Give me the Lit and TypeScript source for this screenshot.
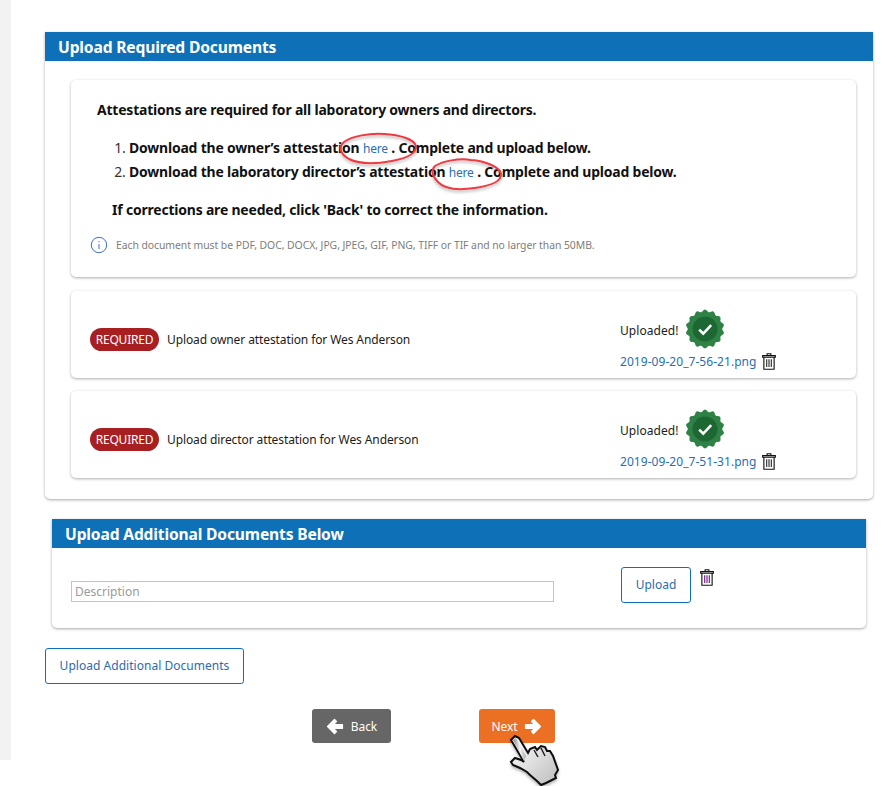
import { LitElement, html, css, svg } from "lit";
import { customElement } from "lit/decorators.js";

function scallop(cx: number, cy: number, r: number, amp: number, n: number) {
  let d = "";
  const steps = n * 8;
  for (let i = 0; i <= steps; i++) {
    const a = (i / steps) * Math.PI * 2;
    const rr = r + amp * Math.cos(a * n);
    d += (i ? "L" : "M") + (cx + rr * Math.sin(a)).toFixed(2) + " " + (cy - rr * Math.cos(a)).toFixed(2);
  }
  return d + "Z";
}

const badge = html`<svg class="badge" width="40" height="40" viewBox="0 0 40 40">
  <path d=${scallop(20, 20, 18.3, 1.1, 14)} fill="#2f8245"></path>
  <circle cx="20" cy="20" r="12.5" fill="#1d6733"></circle>
  <path d="M14.2 20.6l4 4 8-8.4" fill="none" stroke="#fff" stroke-width="2.6"></path>
</svg>`;

const trash = (bar: string) => html`<svg class="trash" width="14" height="17" viewBox="0 0 15 18">
  <path d="M5.5 2.5V.7h4v1.8M.7 2.7h13.6v1.8H.7zM2 4.5v12.8h11V4.5z" fill="none" stroke="#111" stroke-width="1.2"></path>
  <path d="M5 6.5v8.5M7.5 6.5v8.5M10 6.5v8.5" stroke=${bar} stroke-width="1.3"></path>
</svg>`;

const arrow = (flip: boolean) => html`<svg class="arrow ${flip ? "flip" : ""}" width="18" height="17" viewBox="0 0 18 17">
  <path d="M9.5 1.6l6.9 6.9-6.9 6.9-1.9-1.9 3.3-3.3H1.6V6.8h9.3L7.6 3.5z" fill="#fff" stroke="#fff" stroke-width="1.4" stroke-linejoin="round"></path>
</svg>`;

@customElement("app-root")
export class AppRoot extends LitElement {
  static styles = css`
    :host { display: block; height: 786px; position: relative; overflow: hidden; background: #fff;
      font-family: "Noto Sans", sans-serif; color: #1b1b1b; }
    .page { display: flex; align-items: flex-start; }
    .strip { width: 11px; height: 760px; background: #f2f2f2; flex: none; }
    .main { width: 828px; margin-left: 34px; padding-top: 32px; display: flex; flex-direction: column; }
    .panel { background: #fff; border-radius: 0 0 5px 5px; box-shadow: 0 1px 3px rgba(0,0,0,.35); }
    .head { height: 29px; background: #0e71b8; color: #fff; font-weight: 700; font-size: 15.6px;
      line-height: 30px; padding-left: 13px; letter-spacing: -.15px; }
    .body { padding: 19px 17px 21px 26px; display: flex; flex-direction: column; gap: 13px; }
    .card { background: #fff; border-radius: 5px; box-shadow: 0 1px 3px rgba(0,0,0,.32); }
    .intro { height: 197px; margin-bottom: 1px; box-sizing: border-box; padding: 20px 0 0 26px; font-weight: 700;
      font-size: 13.95px; letter-spacing: -.18px; color: #111; }
    .intro p { margin: 0; line-height: 20px; }
    .intro ol { margin: 16px 0 0; padding: 0 0 0 32px; }
    .intro li { line-height: 24px; height: 24px; }
    .intro li::marker { font-weight: 400; color: #333; }
    .here { font-weight: 400; color: #1f6fb5; font-size: 12px; }
    .correct { margin: 16px 0 0 15px !important; }
    .note { display: flex; align-items: center; gap: 8px; margin: 16px 0 0 -7px; font-weight: 400; font-size: 10.4px;
      color: #7d7d7d; letter-spacing: -.05px; }
    .row { height: 87px; box-sizing: border-box; display: flex; padding: 0 0 0 19px; font-size: 12px; letter-spacing: -.1px; }
    .left { width: 530px; display: flex; align-items: center; gap: 8px; padding-top: 9px; height: 79px; box-sizing: content-box; }
    .pill { background: #a81f22; color: #fff; width: 69px; height: 23px; border-radius: 12px; text-align: center;
      line-height: 23px; font-size: 12px; letter-spacing: -.2px; }
    .right { padding-top: 18px; display: flex; flex-direction: column; }
    .up { display: flex; align-items: center; gap: 7px; height: 40px; font-size: 12px; letter-spacing: .05px; }
    .up span { padding-top: 2px; }
    .file { display: flex; align-items: center; gap: 5px; color: #1f6fb5; font-size: 12px; height: 18px; margin-top: 3px; letter-spacing: .05px; }
    .badge, .trash, .arrow { display: block; flex: none; }
    .extra { margin: 20px 7px 0; }
    .extra-body { height: 80px; display: flex; padding-left: 19px; }
    .desc { width: 483px; height: 21px; box-sizing: border-box; margin-top: 33px; border: 1px solid #c4c4c4;
      font-size: 12px; color: #9a9a9a; line-height: 19px; padding-left: 3px; }
    .btn { box-sizing: border-box; border: 1px solid #0e71b8; border-radius: 3px; background: #fff; color: #2a6cb0;
      font-size: 12px; text-align: center; font-family: inherit; padding: 0 0 2px; }
    .upload { width: 70px; height: 36px; margin: 19px 0 0 67px; }
    .extra-body .trash { margin: 21px 0 0 9px; }
    .more { width: 199px; height: 36px; margin-top: 20px; letter-spacing: .03px; }
    .nav { display: flex; margin: 25px 0 0 267px; gap: 88px; }
    .go { height: 34px; border: none; border-radius: 3px; color: #fff; font: inherit; font-size: 12px; display: flex;
      align-items: center; justify-content: center; gap: 7px; padding: 0; letter-spacing: -.1px; }
    .back { width: 79px; background: #666; }
    .next { width: 76px; background: #ec7024; }
    .flip { transform: scaleX(-1); }
    .ink { position: absolute; left: 0; top: 0; pointer-events: none; }
  `;

  private row(label: string, file: string) {
    return html`<div class="card row">
      <div class="left"><span class="pill">REQUIRED</span><span>${label}</span></div>
      <div class="right">
        <div class="up"><span>Uploaded!</span>${badge}</div>
        <div class="file"><span>${file}</span>${trash("#3b3b3b")}</div>
      </div>
    </div>`;
  }

  render() {
    return html`
      <div class="page">
        <div class="strip"></div>
        <div class="main">
          <section class="panel">
            <div class="head">Upload Required Documents</div>
            <div class="body">
              <div class="card intro">
                <p>Attestations are required for all laboratory owners and directors.</p>
                <ol>
                  <li>Download the owner’s attestation <span class="here">here</span> . Complete and upload below.</li>
                  <li>Download the laboratory director’s attestation <span class="here">here</span> . Complete and upload below.</li>
                </ol>
                <p class="correct">If corrections are needed, click 'Back' to correct the information.</p>
                <div class="note">
                  <svg width="18" height="18" viewBox="0 0 18 18"><circle cx="9" cy="9" r="7.7" fill="none" stroke="#3f6fc4" stroke-width="1"></circle><path d="M9 8v5M9 5v1.3" stroke="#3f6fc4" stroke-width="1"></path></svg>
                  <span>Each document must be PDF, DOC, DOCX, JPG, JPEG, GIF, PNG, TIFF or TIF and no larger than 50MB.</span>
                </div>
              </div>
              ${this.row("Upload owner attestation for Wes Anderson", "2019-09-20_7-56-21.png")}
              ${this.row("Upload director attestation for Wes Anderson", "2019-09-20_7-51-31.png")}
            </div>
          </section>
          <section class="panel extra">
            <div class="head">Upload Additional Documents Below</div>
            <div class="extra-body">
              <div class="desc">Description</div>
              <button class="btn upload">Upload</button>
              ${trash("#7a2a8c")}
            </div>
          </section>
          <button class="btn more">Upload Additional Documents</button>
          <div class="nav">
            <button class="go back">${arrow(true)}<span>Back</span></button>
            <button class="go next"><span>Next</span>${arrow(false)}</button>
          </div>
        </div>
      </div>
      <svg class="ink" width="887" height="786" viewBox="0 0 887 786">
        ${svg`
        <defs>
          <filter id="sh" x="-20%" y="-20%" width="140%" height="150%"><feDropShadow dx="0" dy="2" stdDeviation="1.6" flood-color="#000" flood-opacity=".3"></feDropShadow></filter>
          <linearGradient id="hand" x1="0" y1="0" x2="1" y2="1"><stop offset="0" stop-color="#fff"></stop><stop offset="1" stop-color="#bdbdbd"></stop></linearGradient>
          <linearGradient id="finger" x1="0" y1="0" x2="1" y2="0"><stop offset="0" stop-color="#888"></stop><stop offset=".55" stop-color="#f5f5f5"></stop><stop offset="1" stop-color="#aaa"></stop></linearGradient>
        </defs>
        <path d="M344 142c8-6 26-9 40-8 16 1 30 5 32 12 1 7-9 12-24 15-16 3-33 3-43-2-9-5-11-12-5-17z" fill="none" stroke="#ee3b43" stroke-width="2" filter="url(#sh)"></path>
        <path d="M435 166c8-5 24-8 36-6 14 1 29 7 30 14 1 8-13 12-26 14-14 2-30 2-37-6-6-6-7-12-3-16z" fill="none" stroke="#ee3b43" stroke-width="2" filter="url(#sh)"></path>
        <g filter="url(#sh)" stroke-linejoin="miter">
          <path d="M511 740L515 736L519 738L528 753L530 749L535 747L537 750L541 746L545 747L547 751L550 751L553 756L558 770L555 775L556 778L546 783L541 785L537 781L530 775L527 772L520 768L513 765L511 762L515 758L521 760L524 762Z" fill="url(#hand)" stroke="#111" stroke-width="2"></path>
          <path d="M513 740L516 738L526 756L524 761Z" fill="url(#finger)"></path>
          <path d="M534 750L538 757M541 748L545 756" fill="none" stroke="#222" stroke-width="1.5"></path>
        </g>
        `}
      </svg>
    `;
  }
}
